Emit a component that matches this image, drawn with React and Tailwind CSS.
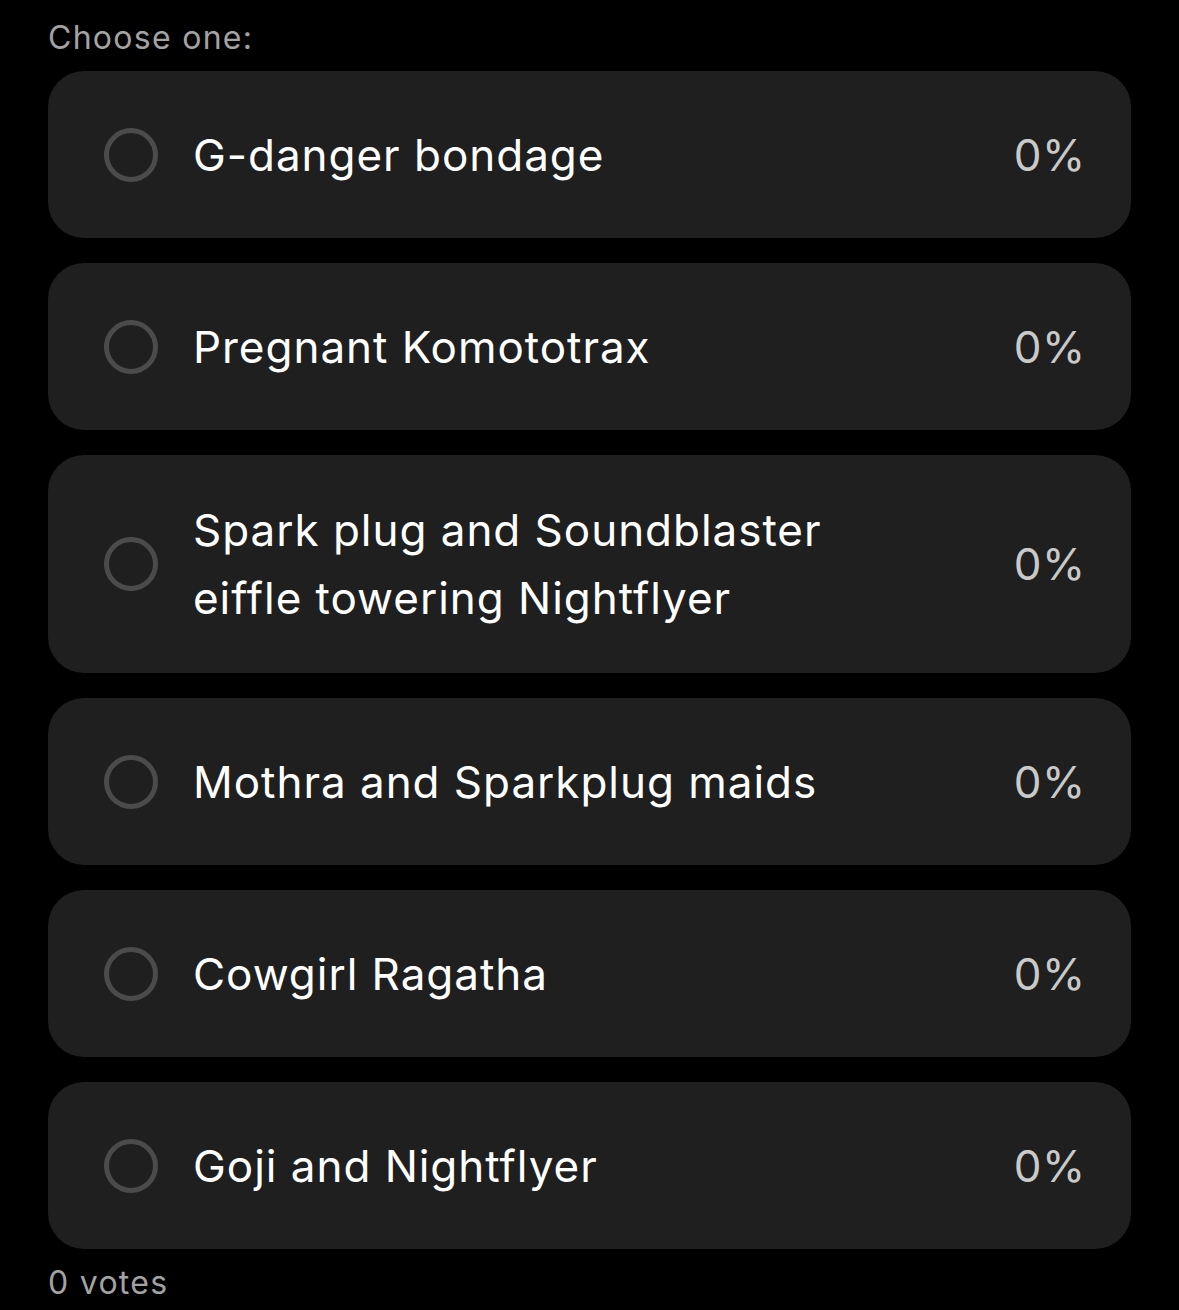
const options = [
  "G-danger bondage",
  "Pregnant Komototrax",
  "Spark plug and Soundblaster eiffle towering Nightflyer",
  "Mothra and Sparkplug maids",
  "Cowgirl Ragatha",
  "Goji and Nightflyer",
];

const Radio = () => (
  <span className="shrink-0 w-[54px] h-[54px] rounded-full border-[5px] border-[#4b4b4b]" />
);

export default function App() {
  return (
    <div
      className="min-h-[1310px] bg-black px-[48px] pt-[14px] text-white"
      style={{ fontFamily: "Inter, 'Noto Sans', sans-serif" }}
    >
      <div className="text-[32px] leading-[48px] tracking-[0.04em] text-[#a3a3a3]">Choose one:</div>
      <div className="mt-[9px] flex flex-col gap-[25px]">
        {options.map((o) => (
          <div
            key={o}
            className="flex min-h-[167px] items-center rounded-[36px] bg-[#1f1f1f] py-[41px] pl-[56px] pr-[45px]"
          >
            <Radio />
            <div className="ml-[35px] flex-1">
              <div className="max-w-[660px] text-[44px] leading-[68px] tracking-[0.022em] text-white">
                {o}
              </div>
            </div>
            <div className="text-[44px] leading-[68px] tracking-[0.015em] text-[#c9c9c9]">0%</div>
          </div>
        ))}
      </div>
      <div className="mt-[14px] text-[32px] leading-[40px] tracking-[0.04em] text-[#a3a3a3]">0 votes</div>
    </div>
  );
}
